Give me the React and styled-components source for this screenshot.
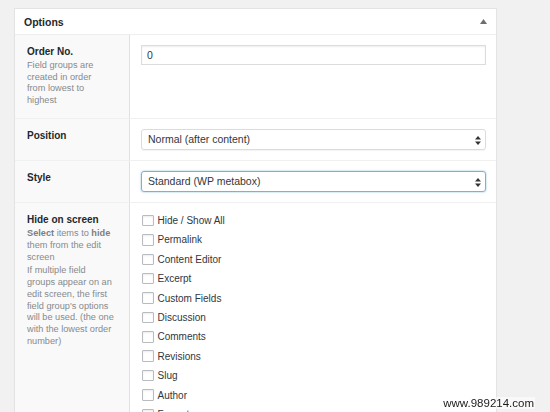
import React from 'react'
import styled, { createGlobalStyle } from 'styled-components'

const GlobalStyle = createGlobalStyle`
    html, body {
        margin: 0;
        padding: 0;
        overflow: hidden;
        background: #f1f1f1;
        font-family: "Liberation Sans", Helvetica, Arial, sans-serif;
        color: #23282d;
    }
    * { box-sizing: border-box; }
`;

const Page = styled.div`
    padding: 8px 0 0 14px;
    height: 412px;
`;

const Panel = styled.div`
    width: 483px;
    background: #fff;
    border: 1px solid #e3e3e3;
    box-shadow: 0 1px 1px rgba(0, 0, 0, 0.04);
`;

const Header = styled.div`
    height: 26px;
    display: flex;
    align-items: center;
    justify-content: space-between;
    padding: 0 9px 0 9px;
    border-bottom: 1px solid #eeeeee;
`;

const HeaderTitle = styled.h2`
    margin: 0;
    font-size: 10.5px;
    font-weight: 700;
    color: #23282d;
`;

const Row = styled.div`
    display: grid;
    grid-template-columns: 115px 1fr;
    border-top: ${(p) => (p.$first ? 'none' : '1px solid #f0f0f0')};
`;

const LabelCell = styled.div`
    background: #f9f9f9;
    border-right: 1px solid #e1e1e1;
    padding: ${(p) => p.$pad || '10px 8px 11px 12px'};
`;

const Label = styled.div`
    font-size: 10px;
    font-weight: 700;
    line-height: 13px;
    color: #23282d;
`;

const Desc = styled.p`
    margin: 2px 0 0;
    font-size: 9.2px;
    line-height: 11.7px;
    color: #878a8d;
    white-space: nowrap;

    b {
        font-weight: 700;
        color: #7c7f82;
    }
`;

const FieldCell = styled.div`
    padding: ${(p) => p.$pad || '10px 10px 10px 11px'};
`;

const TextInput = styled.div`
    height: 20px;
    border: 1px solid #dcdcdc;
    box-shadow: inset 0 1px 2px rgba(0, 0, 0, 0.07);
    font-size: 10.5px;
    line-height: 18px;
    padding: 0 5px;
    color: #32373c;
`;

const SelectBox = styled.div`
    position: relative;
    height: 21px;
    border: 1px solid ${(p) => (p.$focus ? '#86acd3' : '#dcdcdc')};
    border-radius: 3px;
    box-shadow: ${(p) =>
        p.$focus
            ? '0 0 2px rgba(30, 140, 190, 0.55)'
            : '0 1px 1px rgba(0, 0, 0, 0.05)'};
    font-size: 10.5px;
    line-height: 19px;
    padding: 0 6px;
    color: #32373c;
`;

const Arrows = styled.svg`
    position: absolute;
    right: 4px;
    top: 6px;
`;

const CheckList = styled.ul`
    list-style: none;
    margin: 0;
    padding: 0;
`;

const CheckItem = styled.li`
    height: 19.4px;
    display: flex;
    align-items: center;
    gap: 4px;
    font-size: 10px;
    color: #32373c;
`;

const Box = styled.span`
    width: 11.5px;
    height: 11.5px;
    border: 1px solid #b8bcc0;
    border-radius: 1px;
    background: #fff;
    box-shadow: inset 0 1px 2px rgba(0, 0, 0, 0.08);
    flex-shrink: 0;
`;

const Watermark = styled.div`
    position: fixed;
    right: 15px;
    bottom: 3px;
    font-family: "Liberation Sans", Arial, sans-serif;
    font-size: 11.5px;
    color: #1a1a1a;
    background: rgba(255, 255, 255, 0.6);
    padding: 0 1px;
`;

const SelectArrows = () => (
    <Arrows width="6" height="9" viewBox="0 0 6 9">
        <path d="M0 3.5 L3 0 L6 3.5 Z" fill="#333" />
        <path d="M0 5.5 L3 9 L6 5.5 Z" fill="#333" />
    </Arrows>
);

const hideItems = [
    'Hide / Show All',
    'Permalink',
    'Content Editor',
    'Excerpt',
    'Custom Fields',
    'Discussion',
    'Comments',
    'Revisions',
    'Slug',
    'Author',
    'Format',
    'Page Attributes',
    'Featured Image',
];

export default function App() {
    return (
        <>
            <GlobalStyle />
            <Page>
                <Panel>
                    <Header>
                        <HeaderTitle>Options</HeaderTitle>
                        <svg width="7" height="5" viewBox="0 0 7 5">
                            <path d="M0 5 L3.5 0 L7 5 Z" fill="#6b6f73" />
                        </svg>
                    </Header>

                    <Row $first>
                        <LabelCell>
                            <Label>Order No.</Label>
                            <Desc>
                                Field groups are<br />
                                created in order<br />
                                from lowest to<br />
                                highest
                            </Desc>
                        </LabelCell>
                        <FieldCell>
                            <TextInput>0</TextInput>
                        </FieldCell>
                    </Row>

                    <Row>
                        <LabelCell>
                            <Label>Position</Label>
                        </LabelCell>
                        <FieldCell>
                            <SelectBox>
                                Normal (after content)
                                <SelectArrows />
                            </SelectBox>
                        </FieldCell>
                    </Row>

                    <Row>
                        <LabelCell>
                            <Label>Style</Label>
                        </LabelCell>
                        <FieldCell>
                            <SelectBox $focus>
                                Standard (WP metabox)
                                <SelectArrows />
                            </SelectBox>
                        </FieldCell>
                    </Row>

                    <Row>
                        <LabelCell $pad="10.5px 8px 11px 12px">
                            <Label>Hide on screen</Label>
                            <Desc>
                                <b>Select</b> items to <b>hide</b><br />
                                them from the edit<br />
                                screen
                            </Desc>
                            <Desc>
                                If multiple field<br />
                                groups appear on an<br />
                                edit screen, the first<br />
                                field group's options<br />
                                will be used. (the one<br />
                                with the lowest order<br />
                                number)
                            </Desc>
                        </LabelCell>
                        <FieldCell $pad="8px 10px 10px 12px">
                            <CheckList>
                                {hideItems.map((item) => (
                                    <CheckItem key={item}>
                                        <Box />
                                        {item}
                                    </CheckItem>
                                ))}
                            </CheckList>
                        </FieldCell>
                    </Row>
                </Panel>
            </Page>
            <Watermark>www.989214.com</Watermark>
        </>
    )
}
